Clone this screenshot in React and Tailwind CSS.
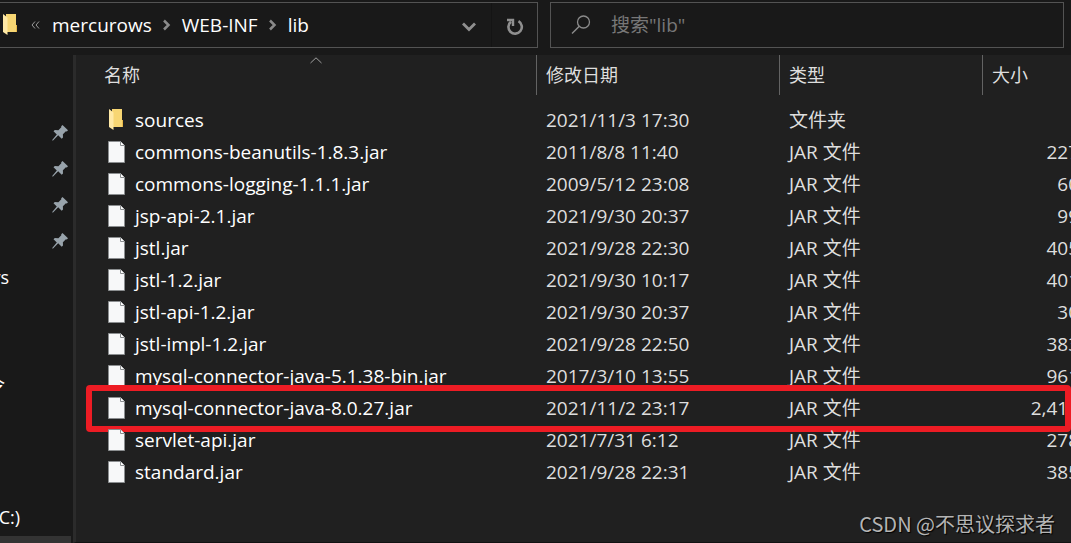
import React, { useState } from 'react';

const FILES = [
  { name: 'sources', date: '2021/11/3 17:30', type: '文件夹', size: '', folder: true },
  { name: 'commons-beanutils-1.8.3.jar', date: '2011/8/8 11:40', type: 'JAR 文件', size: '227' },
  { name: 'commons-logging-1.1.1.jar', date: '2009/5/12 23:08', type: 'JAR 文件', size: '60' },
  { name: 'jsp-api-2.1.jar', date: '2021/9/30 20:37', type: 'JAR 文件', size: '99' },
  { name: 'jstl.jar', date: '2021/9/28 22:30', type: 'JAR 文件', size: '405' },
  { name: 'jstl-1.2.jar', date: '2021/9/30 10:17', type: 'JAR 文件', size: '401' },
  { name: 'jstl-api-1.2.jar', date: '2021/9/30 20:37', type: 'JAR 文件', size: '30' },
  { name: 'jstl-impl-1.2.jar', date: '2021/9/28 22:50', type: 'JAR 文件', size: '383' },
  { name: 'mysql-connector-java-5.1.38-bin.jar', date: '2017/3/10 13:55', type: 'JAR 文件', size: '961' },
  { name: 'mysql-connector-java-8.0.27.jar', date: '2021/11/2 23:17', type: 'JAR 文件', size: '2,414', marked: true },
  { name: 'servlet-api.jar', date: '2021/7/31 6:12', type: 'JAR 文件', size: '278' },
  { name: 'standard.jar', date: '2021/9/28 22:31', type: 'JAR 文件', size: '385' },
];

const CRUMBS = ['mercurows', 'WEB-INF', 'lib'];

function FolderIcon() {
  return (
    <svg width="17" height="22" viewBox="0 0 17 22" className="shrink-0" aria-hidden="true">
      <path d="M1 0h13v11h1v7H4V0z" fill="#f7d673" />
      <path d="M1 0l4.500 3.500v17.500L1 18z" fill="#ffe9a6" />
      <path d="M14 11h1v7h-1z" fill="#e8b94a" />
    </svg>
  );
}

function FileIcon() {
  return (
    <svg width="17" height="22" viewBox="0 0 17 22" className="shrink-0" aria-hidden="true">
      <path d="M.5.5h12l4 4v17H.5z" fill="#f7f8f9" stroke="#8b8e90" />
      <path d="M12.500.5v4h4" fill="#fff" stroke="#8b8e90" />
    </svg>
  );
}

function PinIcon() {
  return (
    <svg width="16" height="16" viewBox="0 0 16 16" aria-hidden="true">
      <path d="M10.500 0l5.500 5.200-1.200 1.200-.9-.2-3 3 .1 3.300-1.300 1.300-3.500-3.500L.8 15.700.2 15.100l4.600-5.500L1.500 6.200l1.300-1.200 3.600.2 2.900-3L9.200 1.200z" fill="#98a3ab" />
    </svg>
  );
}

function Chevron() {
  return (
    <svg width="10" height="12" viewBox="0 0 10 12" className="shrink-0" aria-hidden="true">
      <path d="M2 1.500L6.500 6 2 10.500" fill="none" stroke="#8a8a8a" strokeWidth="2.500" />
    </svg>
  );
}

function AddressBar() {
  return (
    <nav className="flex h-[46px] w-[538px] items-center border border-l-0 border-[#535353] text-white">
      <span className="ml-0.5"><FolderIcon /></span>
      <svg width="9" height="8" viewBox="0 0 9 8" className="ml-3 shrink-0" aria-hidden="true">
        <path d="M4 .5L1 4l3 3.500M8 .5L5 4l3 3.500" fill="none" stroke="#9a9a9a" />
      </svg>
      <ol className="ml-3 flex items-center text-[19px]">
        {CRUMBS.map((crumb, i) => (
          <li key={crumb} className="flex items-center">
            {i > 0 && <span className="mx-2.5"><Chevron /></span>}
            <a href="#">{crumb}</a>
          </li>
        ))}
      </ol>
      <button aria-label="历史记录" className="ml-auto flex h-full w-11 items-center justify-center">
        <svg width="14" height="10" viewBox="0 0 14 10" className="mt-1" aria-hidden="true">
          <path d="M1 1.500l6 6 6-6" fill="none" stroke="#8f8f8f" strokeWidth="2.800" />
        </svg>
      </button>
      <button aria-label="刷新" className="flex h-full w-[46px] items-center justify-center border-l border-[#141414]">
        <svg width="18" height="18" viewBox="0 0 18 18" className="mt-1" aria-hidden="true">
          <path d="M12.500 3.200a6.700 6.700 0 1 1-7.500.5" fill="none" stroke="#8f8f8f" strokeWidth="2.600" />
          <path d="M1 2h6v6" fill="none" stroke="#8f8f8f" strokeWidth="2.400" />
        </svg>
      </button>
    </nav>
  );
}

function SearchBox() {
  const [query, setQuery] = useState('');
  return (
    <label className="flex h-[46px] min-w-0 flex-1 items-center border border-[#535353] pl-5">
      <svg width="20" height="20" viewBox="0 0 20 20" className="shrink-0" aria-hidden="true">
        <circle cx="12.500" cy="7" r="6" fill="none" stroke="#8b8b8b" strokeWidth="1.300" />
        <path d="M8.300 11.300L1 18.500" stroke="#8b8b8b" strokeWidth="1.500" />
      </svg>
      <input
        type="text"
        aria-label="搜索"
        value={query}
        onChange={e => setQuery(e.target.value)}
        placeholder={'搜索"lib"'}
        className="ml-5 min-w-0 flex-1 bg-transparent text-[19px] text-white outline-none placeholder:text-[#777777]"
      />
    </label>
  );
}

function Sidebar() {
  return (
    <aside className="flex w-[73px] shrink-0 flex-col overflow-hidden pt-[60px] text-lg text-white">
      {[0, 1, 2, 3].map(i => (
        <div key={i} className="flex h-9 items-center justify-end pr-[5px]"><PinIcon /></div>
      ))}
      <div className="flex h-9 w-[9px] items-center justify-end">ys</div>
      <div className="mt-[72px] flex h-9 w-[5px] items-center justify-end">令</div>
      <div className="mt-24 flex h-9 w-5 items-center justify-end">C:)</div>
      <div className="mt-auto mr-0.5 h-[7px] bg-[#333333]" />
    </aside>
  );
}

function FileTable() {
  return (
    <table className="w-[calc(100%+12px)] table-fixed border-separate border-spacing-0 text-left">
      <colgroup>
        <col />
        <col className="w-[243px]" />
        <col className="w-[203px]" />
        <col className="w-[100px]" />
      </colgroup>
      <thead className="text-lg text-[#dedede]">
        <tr className="h-10">
          <th className="relative border-r border-[#636363] p-0 pl-7 font-normal">
            名称
            <svg width="12" height="7" viewBox="0 0 12 7" className="absolute top-0.5 left-[234px]" aria-hidden="true">
              <path d="M.5 6L6 .8 11.500 6" fill="none" stroke="#a0a0a0" />
            </svg>
          </th>
          <th className="border-r border-[#636363] p-0 pl-[9px] font-normal">修改日期</th>
          <th className="border-r border-[#636363] p-0 pl-[9px] font-normal">类型</th>
          <th className="p-0 pl-[9px] font-normal">大小</th>
        </tr>
      </thead>
      <tbody className="text-[19px] text-[#dedede] before:block before:h-[9px]">
        {FILES.map(file => (
          <tr key={file.name} className="relative h-8">
            <td className="p-0 pl-8">
              <div className="flex items-center gap-2.5 whitespace-nowrap text-white">
                {file.folder ? <FolderIcon /> : <FileIcon />}
                {file.name}
              </div>
              {file.marked && (
                <span className="absolute -top-[7px] right-3 -bottom-2 left-2.5 rounded-sm border-6 border-[#ed1c24]" />
              )}
            </td>
            <td className="p-0 pl-[9px]">{file.date}</td>
            <td className="p-0 pl-[9px]">{file.type}</td>
            <td className="p-0 pr-1 text-right">{file.size}</td>
          </tr>
        ))}
      </tbody>
    </table>
  );
}

export default function App() {
  return (
    <div className="flex min-h-screen flex-col overflow-hidden bg-[#191919] font-['Open_Sans','Noto_Sans_CJK_SC',sans-serif]">
      <header className="flex gap-3 pt-0.5 pr-[7px] pb-[7px]">
        <AddressBar />
        <SearchBox />
      </header>
      <div className="flex flex-1">
        <Sidebar />
        <main className="relative min-w-0 flex-1 overflow-hidden border-b border-l-3 border-b-[#121212] border-l-[#2b2b2b] bg-[#202020]">
          <FileTable />
          <p className="absolute right-4 bottom-1 font-['Noto_Sans_CJK_SC',sans-serif] text-xl text-[#b4b4b4] [text-shadow:1px_1px_1px_#000]">
            CSDN @不思议探求者
          </p>
        </main>
      </div>
    </div>
  );
}
